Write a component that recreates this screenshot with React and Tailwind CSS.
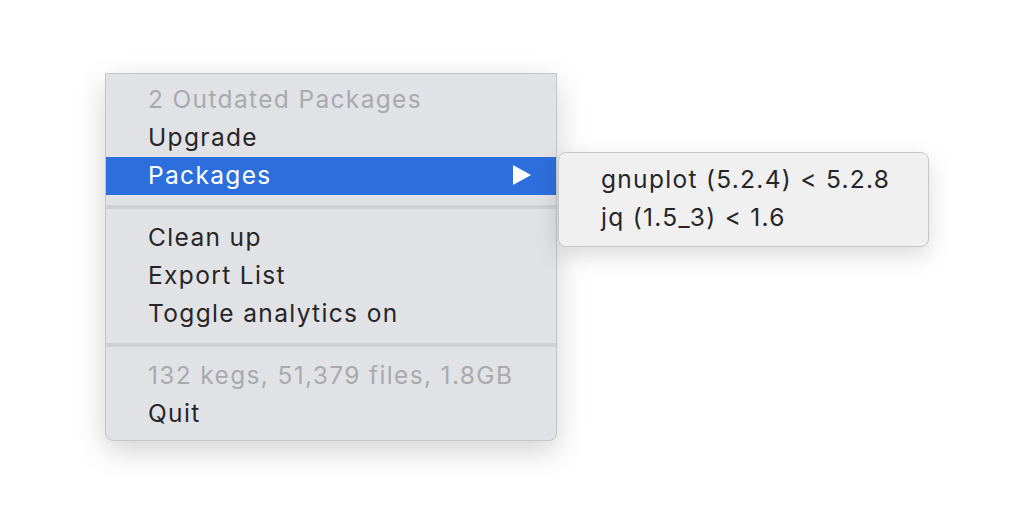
import React from "react";

const Item = ({ children, disabled, active, arrow }) => (
    <div
        className={`h-[38px] flex items-center pl-[42px] pr-[25px] pb-[2px] ${active ? "bg-[#2c6fdc] text-white" : disabled ? "text-[#a9aaae]" : "text-[#262628]"
            }`}
    >
        <span className="flex-1 whitespace-nowrap">{children}</span>
        {arrow && (
            <svg width="18" height="20" viewBox="0 0 18 20">
                <path d="M0 0 L18 10 L0 20 Z" fill="white" />
            </svg>
        )}
    </div>
);

const Separator = () => (
    <div className="py-[10px]">
        <div className="h-[4px] bg-[#cfd0d4]" />
    </div>
);

export default function App() {
    return (
        <div
            className="w-[1012px] h-[532px] bg-white flex items-start"
            style={{ fontFamily: "Inter, 'Noto Sans', sans-serif" }}
        >
            {/* Main menu */}
            <div className="ml-[105px] mt-[73px] w-[452px] bg-[#e1e2e6] border border-[#c4c5c9] rounded-b-[8px] py-[7px] text-[24.5px] tracking-[1.35px] shadow-[0_10px_30px_rgba(0,0,0,0.18)]">
                <Item disabled>2 Outdated Packages</Item>
                <Item>Upgrade</Item>
                <Item active arrow>Packages</Item>
                <Separator />
                <Item>Clean up</Item>
                <Item>Export List</Item>
                <Item>Toggle analytics on</Item>
                <Separator />
                <Item disabled>132 kegs, 51,379 files, 1.8GB</Item>
                <Item>Quit</Item>
            </div>

            {/* Submenu */}
            <div className="ml-[1px] mt-[152px] w-[371px] bg-[#f0f0f0] border border-[#c6c6c6] rounded-[8px] pt-[8px] pb-[9px] text-[24.5px] tracking-[1.3px] text-[#262628] shadow-[0_8px_24px_rgba(0,0,0,0.15)]">
                <div className="h-[38px] flex items-center pl-[42px] pb-[2px] whitespace-nowrap">
                    gnuplot (5.2.4) &lt; 5.2.8
                </div>
                <div className="h-[38px] flex items-center pl-[42px] pb-[2px] whitespace-nowrap">
                    jq (1.5_3) &lt; 1.6
                </div>
            </div>
        </div>
    );
}
